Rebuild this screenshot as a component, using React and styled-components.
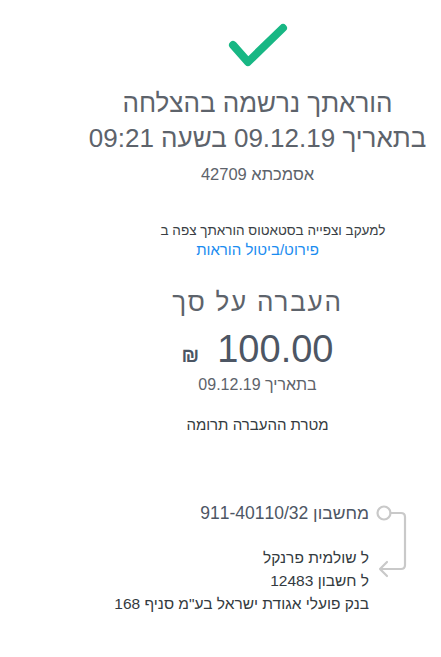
import React from 'react';
import styled, { createGlobalStyle } from 'styled-components';

const GlobalStyle = createGlobalStyle`
  body, html, #root {
    margin: 0;
    padding: 0;
    background: #fff;
    font-family: 'Liberation Sans', Arial, sans-serif;
  }
`;

const Page = styled.div`
  direction: rtl;
  display: flex;
  flex-direction: column;
  align-items: center;
  padding: 22px 0 40px 74px;
  text-align: center;
  color: #555;
`;

const Check = styled.svg`
  width: 62px;
  height: 48px;
`;

const Title = styled.h1`
  margin: 16px 0 0;
  font-size: 26px;
  line-height: 35px;
  font-weight: 400;
  color: #5d636b;
`;

const Reference = styled.div`
  margin-top: 9px;
  font-size: 16.5px;
  color: #5d636b;
`;

const Track = styled.div`
  margin-top: 36px;
  font-size: 15px;
  line-height: 19px;
  color: #3a3f45;
  span {
    display: inline-block;
    padding-left: 31px;
    font-size: 13.5px;
  }
`;

const Link = styled.a`
  color: #1a8cf0;
  text-decoration: none;
  cursor: pointer;
`;

const SectionLabel = styled.h2`
  margin: 28px 0 0;
  font-size: 26px;
  font-weight: 400;
  letter-spacing: 1.8px;
  color: #5d636b;
`;

const Amount = styled.div`
  margin-top: 10px;
  display: flex;
  align-items: baseline;
  gap: 18px;
  font-size: 38px;
  color: #4d5664;
`;

const Shekel = styled.span`
  font-size: 20px;
  font-weight: 700;
  color: #4a5563;
`;

const DateLine = styled.div`
  margin-top: 5px;
  font-size: 16px;
  color: #5d636b;
`;

const Purpose = styled.div`
  margin-top: 22px;
  font-size: 15px;
  color: #333a40;
`;

const Transfer = styled.div`
  align-self: flex-start;
  margin: 69px 33px 0 0;
  display: flex;
  gap: 7px;
`;

const Route = styled.svg`
  width: 32px;
  height: 80px;
  flex-shrink: 0;
`;

const Details = styled.div`
  display: flex;
  flex-direction: column;
  align-items: flex-start;
  text-align: right;
  font-size: 15.5px;
`;

const FromLine = styled.div`
  line-height: 22px;
  margin-bottom: 22px;
  font-size: 17.5px;
  color: #4d5664;
`;

const Line = styled.div`
  line-height: 23px;
  color: ${(p) => (p.$dark ? '#333a40' : '#4d5664')};
`;

export default function App() {
  return (
    <>
      <GlobalStyle />
      <Page>
        <Check viewBox="0 0 62 48">
          <path
            d="M6 23 L21 40 L56 6"
            fill="none"
            stroke="#18b784"
            strokeWidth="8"
            strokeLinecap="round"
            strokeLinejoin="round"
          />
        </Check>

        <Title>
          הוראתך נרשמה בהצלחה
          <br />
          בתאריך 09.12.19 בשעה 09:21
        </Title>

        <Reference>אסמכתא 42709</Reference>

        <Track>
          <span>למעקב וצפייה בסטאטוס הוראתך צפה ב</span>
          <br />
          <Link>פירוט/ביטול הוראות</Link>
        </Track>

        <SectionLabel>העברה על סך</SectionLabel>

        <Amount>
          <span>100.00</span>
          <Shekel>₪</Shekel>
        </Amount>

        <DateLine>בתאריך 09.12.19</DateLine>

        <Purpose>מטרת ההעברה תרומה</Purpose>

        <Transfer>
          <Route viewBox="0 0 32 80">
            <circle cx="8" cy="11" r="6.5" fill="none" stroke="#c9c9c9" strokeWidth="2.2" />
            <path
              d="M14.5 11 H25 Q29 11 29 15 V63 Q29 67 25 67 H4 M11 60 L4 67 L11 74"
              fill="none"
              stroke="#c9c9c9"
              strokeWidth="2.2"
              strokeLinecap="round"
              strokeLinejoin="round"
            />
          </Route>
          <Details>
            <FromLine>מחשבון 911-40110/32</FromLine>
            <Line $dark>ל שולמית פרנקל</Line>
            <Line $dark>ל חשבון 12483</Line>
            <Line $dark>בנק פועלי אגודת ישראל בע"מ סניף 168</Line>
          </Details>
        </Transfer>
      </Page>
    </>
  );
}
